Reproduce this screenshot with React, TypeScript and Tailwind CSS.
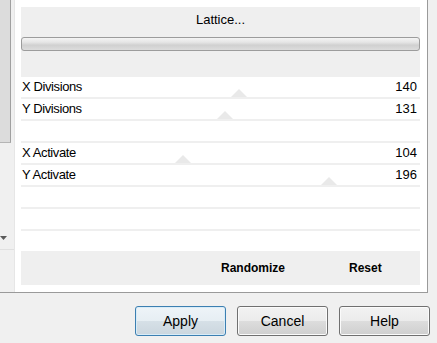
import React from "react";

const font = { fontFamily: '"Liberation Sans", Tahoma, Arial, sans-serif' };

function Tri({ x, color = "#e9e9e9" }: { x: number; color?: string }) {
  return (
    <svg
      className="absolute bottom-0"
      style={{ left: x - 8 }}
      width="16"
      height="8"
      viewBox="0 0 16 8"
    >
      <polygon points="0,8 8,0 16,8" fill={color} />
    </svg>
  );
}

function Row({
  label,
  value,
  tri,
}: {
  label?: string;
  value?: string;
  tri?: number;
}) {
  return (
    <div className="relative h-[22px] border-b-2 border-[#efefef] flex items-center justify-between pl-[1px] pr-[3px] text-[13px] text-black">
      <span className="tracking-[-0.4px]">{label}</span>
      <span>{value}</span>
      {tri !== undefined && <Tri x={tri - 22} />}
    </div>
  );
}

function Btn({ label, primary }: { label: string; primary?: boolean }) {
  return (
    <div
      className={
        "w-[91px] h-[30px] rounded-[3px] flex items-center justify-center text-[14px] text-black border " +
        (primary
          ? "border-[#3c7fb1] bg-[linear-gradient(#eef4f8_0%,#e6eef3_50%,#d6e0e7_50%,#cbd6de_100%)] shadow-[inset_0_0_0_1px_#d8ecf8]"
          : "border-[#707070] bg-[linear-gradient(#f2f2f2_0%,#ebebeb_50%,#dddddd_50%,#cfcfcf_100%)] shadow-[inset_0_0_0_1px_#fbfbfb]")
      }
    >
      {label}
    </div>
  );
}

export default function App() {
  return (
    <div className="w-[437px] h-[343px] bg-[#f0f0f0] flex flex-col overflow-hidden" style={font}>
      <div className="flex h-[293px] w-[428px] border-b border-r border-[#9a9a9a] bg-white">
        <div className="w-[15px] flex flex-col border-r border-[#e6e6e6] bg-[#f0f0f0]">
          <div className="h-[250px] flex flex-col border-b border-[#e0e0e0]">
            <div className="h-[143px] w-[11px] bg-[#dcdcdc] border-r border-[#a0a0a0] border-b border-b-[#b5b5b5]" />
            <div className="flex-1 relative">
              <svg className="absolute left-0 top-[93px]" width="7" height="4" viewBox="0 0 7 4">
                <polygon points="0,0 7,0 3.5,4" fill="#5a5a5a" />
              </svg>
            </div>
          </div>
        </div>
        <div className="flex-1 pl-[6px] pr-[7px] pt-[7px] flex flex-col">
          <div className="h-[70px] bg-[#efefef] flex flex-col items-center">
            <div className="mt-[5px] text-[13px] text-black leading-[16px]">Lattice...</div>
            <div className="mt-[9px] w-full h-[14px] rounded-[3px] border border-[#9c9c9c] bg-[linear-gradient(#f4f4f4_0%,#e6e6e6_35%,#d0d0d0_60%,#dcdcdc_100%)]" />
          </div>
          <Row label="X Divisions" value="140" tri={240} />
          <Row label="Y Divisions" value="131" tri={226} />
          <Row />
          <Row label="X Activate" value="104" tri={184} />
          <Row label="Y Activate" value="196" tri={330} />
          <Row />
          <Row />
          <div className="h-[20px]" />
          <div className="h-[34px] bg-[#efefef] flex items-center text-[12px] font-bold text-black">
            <span className="ml-[200px]">Randomize</span>
            <span className="ml-[64px]">Reset</span>
          </div>
        </div>
      </div>
      <div className="flex justify-end gap-[11px] pr-[7px] pt-[13px]">
        <Btn label="Apply" primary />
        <Btn label="Cancel" />
        <Btn label="Help" />
      </div>
    </div>
  );
}
